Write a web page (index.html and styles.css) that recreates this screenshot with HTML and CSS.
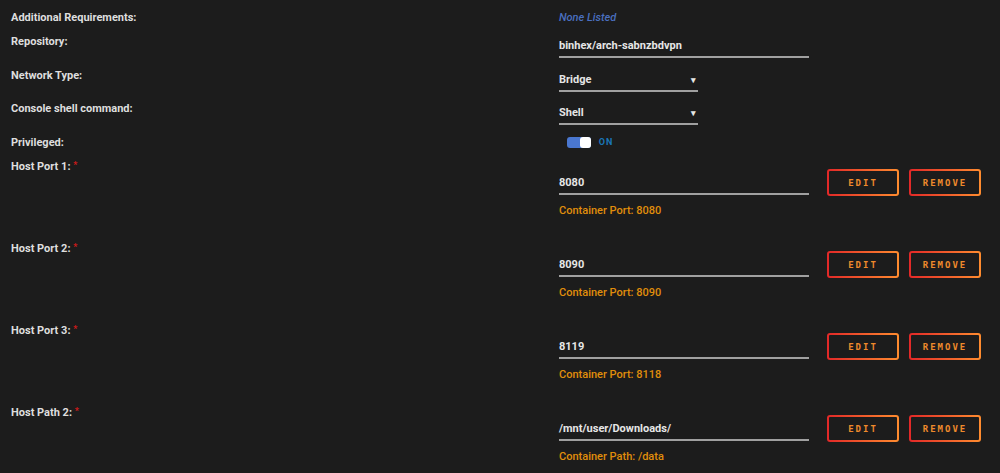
FILE: index.html
```html
<!DOCTYPE html>
<html lang="en">
<head>
    <meta charset="UTF-8">
    <title>Update Container</title>
    <link rel="stylesheet" href="styles.css">
</head>
<body>
    <div class="form">
        <div class="row row-short">
            <div class="label">Additional Requirements:</div>
            <div class="value"><span class="none">None Listed</span></div>
        </div>
        <div class="row row-field">
            <div class="label">Repository:</div>
            <div class="value"><div class="input wide">binhex/arch-sabnzbdvpn</div></div>
        </div>
        <div class="row row-select">
            <div class="label">Network Type:</div>
            <div class="value"><div class="input select">Bridge<span class="arrow">&#9662;</span></div></div>
        </div>
        <div class="row row-field">
            <div class="label">Console shell command:</div>
            <div class="value"><div class="input select">Shell<span class="arrow">&#9662;</span></div></div>
        </div>
        <div class="row row-short">
            <div class="label">Privileged:</div>
            <div class="value">
                <span class="switch"><span class="knob"></span></span>
                <span class="switch-text">ON</span>
            </div>
        </div>

        <div class="row row-config">
            <div class="label">Host Port 1: <span class="req">*</span></div>
            <div class="value">
                <div class="line">
                    <div class="input wide">8080</div>
                    <button class="btn">Edit</button>
                    <button class="btn">Remove</button>
                </div>
                <div class="hint">Container Port: 8080</div>
            </div>
        </div>
        <div class="row row-config">
            <div class="label">Host Port 2: <span class="req">*</span></div>
            <div class="value">
                <div class="line">
                    <div class="input wide">8090</div>
                    <button class="btn">Edit</button>
                    <button class="btn">Remove</button>
                </div>
                <div class="hint">Container Port: 8090</div>
            </div>
        </div>
        <div class="row row-config">
            <div class="label">Host Port 3: <span class="req">*</span></div>
            <div class="value">
                <div class="line">
                    <div class="input wide">8119</div>
                    <button class="btn">Edit</button>
                    <button class="btn">Remove</button>
                </div>
                <div class="hint">Container Port: 8118</div>
            </div>
        </div>
        <div class="row row-config">
            <div class="label">Host Path 2: <span class="req">*</span></div>
            <div class="value">
                <div class="line">
                    <div class="input wide">/mnt/user/Downloads/</div>
                    <button class="btn">Edit</button>
                    <button class="btn">Remove</button>
                </div>
                <div class="hint">Container Path: /data</div>
            </div>
        </div>
    </div>
</body>
</html>
```

FILE: styles.css
```css
body {
    margin: 0;
    background-color: #1c1c1c;
    color: #dedede;
    font-family: Roboto, "Noto Sans", sans-serif;
    font-size: 11px;
    line-height: 14px;
    overflow: hidden;
}
.form {
    padding-top: 10px;
}
.row {
    display: flex;
}
.row-short {
    height: 24px;
}
.row-short + .row-short {
    height: 23px;
}
.row-field {
    height: 34px;
}
.row-select {
    height: 33px;
}
.row-config {
    height: 82px;
}
.label {
    width: 548px;
    padding-top: 1px;
    padding-left: 11px;
    font-weight: 700;
    flex-shrink: 0;
}
.req {
    color: #d11a1a;
    font-size: 9px;
    vertical-align: top;
    line-height: 10px;
}
.value {
    flex: 1;
}
.none {
    display: inline-block;
    padding-top: 1px;
    color: #4a6fbf;
    font-style: italic;
    font-weight: 500;
}
.input {
    margin-top: 4px;
    padding-top: 1px;
    padding-bottom: 3px;
    border-bottom: 2px solid #a0a0a0;
    font-weight: 700;
    color: #e6e6e6;
    box-sizing: border-box;
    height: 20px;
}
.wide {
    width: 250px;
}
.select {
    width: 139px;
    display: flex;
    justify-content: space-between;
}
.arrow {
    font-size: 9px;
    padding-right: 2px;
}
.switch {
    display: inline-block;
    vertical-align: middle;
    margin-left: 8px;
    margin-top: 1px;
    width: 24px;
    height: 11px;
    border-radius: 3px;
    background-color: #4a77d0;
    position: relative;
}
.knob {
    position: absolute;
    right: 0;
    top: 0;
    width: 11px;
    height: 11px;
    border-radius: 3px;
    background-color: #fff;
}
.switch-text {
    display: inline-block;
    vertical-align: middle;
    margin-left: 5px;
    color: #1a77b8;
    font-size: 9px;
    font-weight: 700;
    letter-spacing: 1px;
}
.line {
    display: flex;
    align-items: flex-start;
}
.line .input {
    margin-top: 16px;
}
.btn {
    margin-top: 10px;
    margin-left: 18px;
    width: 72px;
    height: 27px;
    padding: 0;
    border: 2px solid transparent;
    border-radius: 3px;
    background: linear-gradient(#1c1c1c, #1c1c1c) padding-box, linear-gradient(90deg, #e22828, #ff8c2f) border-box;
    color: #ef8a2c;
    font-family: "DejaVu Sans Mono", monospace;
    font-size: 9px;
    font-weight: 700;
    letter-spacing: 2px;
    text-transform: uppercase;
    cursor: pointer;
}
.btn + .btn {
    margin-left: 10px;
}
.hint {
    margin-top: 8px;
    color: #e08e0b;
    font-weight: 500;
}
```
